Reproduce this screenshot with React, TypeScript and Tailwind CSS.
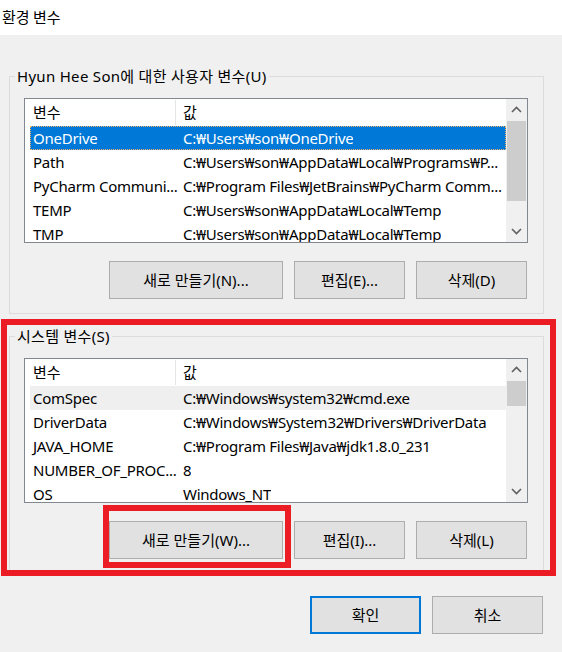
import React from "react";

type Row = { name: string; value: string; state?: "selected" | "inactive" };

const userVars: Row[] = [
  { name: "OneDrive", value: "C:₩Users₩son₩OneDrive", state: "selected" },
  { name: "Path", value: "C:₩Users₩son₩AppData₩Local₩Programs₩P..." },
  { name: "PyCharm Communi...", value: "C:₩Program Files₩JetBrains₩PyCharm Comm..." },
  { name: "TEMP", value: "C:₩Users₩son₩AppData₩Local₩Temp" },
  { name: "TMP", value: "C:₩Users₩son₩AppData₩Local₩Temp" },
];

const systemVars: Row[] = [
  { name: "ComSpec", value: "C:₩Windows₩system32₩cmd.exe", state: "inactive" },
  { name: "DriverData", value: "C:₩Windows₩System32₩Drivers₩DriverData" },
  { name: "JAVA_HOME", value: "C:₩Program Files₩Java₩jdk1.8.0_231" },
  { name: "NUMBER_OF_PROC...", value: "8" },
  { name: "OS", value: "Windows_NT" },
];

function Chevron({ up }: { up?: boolean }) {
  return (
    <svg width="11" height="7" viewBox="0 0 11 7" className="block">
      <polyline
        points={up ? "1,6 5.5,1.5 10,6" : "1,1 5.5,5.5 10,1"}
        fill="none"
        stroke="#606060"
        strokeWidth="1.6"
      />
    </svg>
  );
}

function ScrollBar({ thumb }: { thumb: number }) {
  return (
    <div className="w-[21px] h-full shrink-0 bg-[#f0f0f0] flex flex-col">
      <div className="h-[21px] flex items-center justify-center">
        <Chevron up />
      </div>
      <div className="flex-1">
        <div className="mt-[1px] mx-[1px] bg-[#cdcdcd]" style={{ height: thumb }} />
      </div>
      <div className="h-[21px] flex items-center justify-center">
        <Chevron />
      </div>
    </div>
  );
}

function VarList({ rows, thumb }: { rows: Row[]; thumb: number }) {
  return (
    <div className="ml-[14px] w-[504px] h-[145px] border border-[#828790] bg-white flex">
      <div className="flex-1 min-w-0 overflow-hidden">
        <div className="h-[27px] flex items-center pl-[5px]">
          <div className="w-[146px] h-[25px] shrink-0 pl-[3px] border-r border-[#e5e5e5] flex items-center">변수</div>
          <div className="pl-[7px]">값</div>
        </div>
        {rows.map((r) => (
          <div
            key={r.name}
            className={
              "ml-[5px] h-[24px] flex items-center whitespace-nowrap tracking-[-0.25px] " +
              (r.state === "selected"
                ? "bg-[#0078d7] text-white outline outline-1 outline-dotted outline-offset-[-1px] outline-[#e8b070]"
                : r.state === "inactive"
                ? "bg-[#efefef]"
                : "")
            }
          >
            <div className="w-[150px] shrink-0 pl-[3px] overflow-hidden">{r.name}</div>
            <div className="pl-[3px] min-w-0 overflow-hidden">{r.value}</div>
          </div>
        ))}
      </div>
      <ScrollBar thumb={thumb} />
    </div>
  );
}

function Btn({ label, w, focused }: { label: string; w: string; focused?: boolean }) {
  return (
    <div
      className={
        "h-[38px] bg-[#e1e1e1] flex items-center justify-center " +
        w +
        (focused ? " border-2 border-[#0078d7]" : " border border-[#adadad]")
      }
    >
      {label}
    </div>
  );
}

function Group({
  title,
  rows,
  thumb,
  buttons,
  height,
}: {
  title: string;
  rows: Row[];
  thumb: number;
  buttons: string[];
  height: string;
}) {
  return (
    <div className={"relative ml-[9px] w-[535px] border border-[#dcdcdc] " + height}>
      <div className="absolute left-[5px] top-[-12px] px-[2px] bg-[#f0f0f0] leading-[22px] tracking-[0.3px]">{title}</div>
      <div className="pt-[21px]">
        <VarList rows={rows} thumb={thumb} />
        <div className="mt-[18px] ml-[99px] flex gap-[11px]">
          <Btn label={buttons[0]} w="w-[174px]" />
          <Btn label={buttons[1]} w="w-[111px]" />
          <Btn label={buttons[2]} w="w-[111px]" />
        </div>
      </div>
    </div>
  );
}

export default function App() {
  return (
    <div className="relative w-[562px] h-[652px] overflow-hidden bg-[#f0f0f0] text-black text-[15px] font-['Noto_Sans','Noto_Sans_CJK_KR',sans-serif]">
      <div className="h-[35px] bg-white pl-[2px] flex items-center font-['Noto_Sans_CJK_KR',sans-serif]">환경 변수</div>

      <div className="mt-[41px]">
        <Group
          title="Hyun Hee Son에 대한 사용자 변수(U)"
          rows={userVars}
          thumb={80}
          buttons={["새로 만들기(N)...", "편집(E)...", "삭제(D)"]}
          height="h-[238px]"
        />
      </div>

      <div className="mt-[22px]">
        <Group
          title="시스템 변수(S)"
          rows={systemVars}
          thumb={25}
          buttons={["새로 만들기(W)...", "편집(I)...", "삭제(L)"]}
          height="h-[235px]"
        />
      </div>

      <div className="mt-[25px] flex justify-end gap-[11px] pr-[19px]">
        <Btn label="확인" w="w-[111px]" focused />
        <Btn label="취소" w="w-[111px]" />
      </div>

      {/* 강조 표시 */}
      <div className="absolute left-[1px] top-[319px] w-[555px] h-[257px] border-[6px] border-[#ec1c24] pointer-events-none" />
      <div className="absolute left-[103px] top-[505px] w-[188px] h-[63px] border-[6px] border-[#ec1c24] pointer-events-none" />
    </div>
  );
}
